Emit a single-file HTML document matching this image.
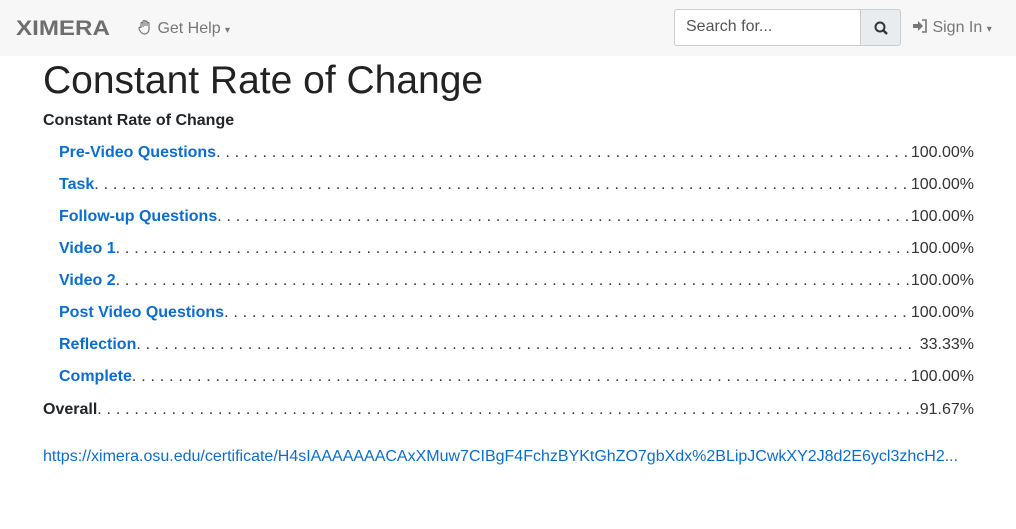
<!DOCTYPE html>
<html><head><meta charset="utf-8"><style>
*{box-sizing:border-box;margin:0;padding:0}
body{width:1016px;height:529px;background:#fff;font-family:"Liberation Sans",sans-serif;color:#212529;overflow:hidden;position:relative}
.nav{position:absolute;left:0;top:0;width:1016px;height:56px;background:#f7f7f7}
.logo{position:absolute;left:16px;top:17px;font-size:21px;font-weight:bold;color:#6e6e6e;letter-spacing:0px;transform:scaleX(1.15);transform-origin:left}
.help{position:absolute;left:137px;top:19px;font-size:16px;color:#777}
.search{position:absolute;left:674px;top:9px;width:187px;height:37px;border:1px solid #ccc;background:#fff;border-radius:3px 0 0 3px;font-size:16px;color:#555;padding:8px 11px}
.sbtn{position:absolute;left:860px;top:9px;width:41px;height:37px;border:1px solid #ccc;background:#e9ecef;border-radius:0 3px 3px 0}
.signin{position:absolute;left:912px;top:19px;font-size:16px;color:#777}
h1{position:absolute;left:43px;top:59px;font-size:39px;font-weight:400;color:#222}
.row{position:absolute;display:flex;font-size:16px;line-height:20px;white-space:nowrap}
.row a{color:#0a6ed1;font-weight:bold;text-decoration:none}
.fill{flex:1;overflow:hidden;letter-spacing:0.2px;color:#333}
.v{color:#333}
.b{font-weight:bold}
.url{position:absolute;left:43px;top:448px;font-size:16px;color:#0a6ed1;white-space:nowrap}
</style></head><body>
<div class="nav">
<div class="logo">XIMERA</div>
<div class="help"><svg width="16" height="16" viewBox="0 0 16 16" style="vertical-align:-2px"><path d="M4 9V4.5a1 1 0 0 1 2 0V8M6 7V2.5a1 1 0 0 1 2 0V7M8 7V3a1 1 0 0 1 2 0v4M10 7V4.5a1 1 0 0 1 2 0V10c0 3-2 5-4.5 5S3.5 13 2.5 11L2 9.5a1 1 0 0 1 2-.5" fill="none" stroke="#777" stroke-width="1.2"/></svg> Get Help <span style="font-size:10px">▾</span></div>
<div class="search">Search for...</div>
<div class="sbtn"><svg width="16" height="16" viewBox="0 0 16 16" style="position:absolute;left:12px;top:10px"><circle cx="7" cy="7" r="4.5" fill="none" stroke="#333" stroke-width="2"/><path d="M10.3 10.3L14 14" stroke="#333" stroke-width="2.4"/></svg></div>
<div class="signin"><svg width="16" height="14" viewBox="0 0 16 14" style="vertical-align:-1px"><path d="M1 5h5V2l5 5-5 5V9H1z" fill="#777"/><path d="M10 1h4v12h-4" fill="none" stroke="#777" stroke-width="1.6"/></svg> Sign In <span style="font-size:10px">▾</span></div>
</div>
<h1>Constant Rate of Change</h1>
<div class="row b" style="left:43px;top:111px">Constant Rate of Change</div>

<div class="row" style="left:59px;top:143px;width:915px"><a>Pre-Video Questions</a><span class="fill">. . . . . . . . . . . . . . . . . . . . . . . . . . . . . . . . . . . . . . . . . . . . . . . . . . . . . . . . . . . . . . . . . . . . . . . . . . . . . . . . . . . . . . . . . . . . . . . . . . . . . . . . . . . . . . . . . . . . . . . . . . . . . . . . . . . . . . . . . . . . . .</span><span class="v">100.00%</span></div>
<div class="row" style="left:59px;top:175px;width:915px"><a>Task</a><span class="fill">. . . . . . . . . . . . . . . . . . . . . . . . . . . . . . . . . . . . . . . . . . . . . . . . . . . . . . . . . . . . . . . . . . . . . . . . . . . . . . . . . . . . . . . . . . . . . . . . . . . . . . . . . . . . . . . . . . . . . . . . . . . . . . . . . . . . . . . . . . . . . .</span><span class="v">100.00%</span></div>
<div class="row" style="left:59px;top:207px;width:915px"><a>Follow-up Questions</a><span class="fill">. . . . . . . . . . . . . . . . . . . . . . . . . . . . . . . . . . . . . . . . . . . . . . . . . . . . . . . . . . . . . . . . . . . . . . . . . . . . . . . . . . . . . . . . . . . . . . . . . . . . . . . . . . . . . . . . . . . . . . . . . . . . . . . . . . . . . . . . . . . . . .</span><span class="v">100.00%</span></div>
<div class="row" style="left:59px;top:239px;width:915px"><a>Video 1</a><span class="fill">. . . . . . . . . . . . . . . . . . . . . . . . . . . . . . . . . . . . . . . . . . . . . . . . . . . . . . . . . . . . . . . . . . . . . . . . . . . . . . . . . . . . . . . . . . . . . . . . . . . . . . . . . . . . . . . . . . . . . . . . . . . . . . . . . . . . . . . . . . . . . .</span><span class="v">100.00%</span></div>
<div class="row" style="left:59px;top:271px;width:915px"><a>Video 2</a><span class="fill">. . . . . . . . . . . . . . . . . . . . . . . . . . . . . . . . . . . . . . . . . . . . . . . . . . . . . . . . . . . . . . . . . . . . . . . . . . . . . . . . . . . . . . . . . . . . . . . . . . . . . . . . . . . . . . . . . . . . . . . . . . . . . . . . . . . . . . . . . . . . . .</span><span class="v">100.00%</span></div>
<div class="row" style="left:59px;top:303px;width:915px"><a>Post Video Questions</a><span class="fill">. . . . . . . . . . . . . . . . . . . . . . . . . . . . . . . . . . . . . . . . . . . . . . . . . . . . . . . . . . . . . . . . . . . . . . . . . . . . . . . . . . . . . . . . . . . . . . . . . . . . . . . . . . . . . . . . . . . . . . . . . . . . . . . . . . . . . . . . . . . . . .</span><span class="v">100.00%</span></div>
<div class="row" style="left:59px;top:335px;width:915px"><a>Reflection</a><span class="fill">. . . . . . . . . . . . . . . . . . . . . . . . . . . . . . . . . . . . . . . . . . . . . . . . . . . . . . . . . . . . . . . . . . . . . . . . . . . . . . . . . . . . . . . . . . . . . . . . . . . . . . . . . . . . . . . . . . . . . . . . . . . . . . . . . . . . . . . . . . . . . .</span><span class="v">&nbsp;33.33%</span></div>
<div class="row" style="left:59px;top:367px;width:915px"><a>Complete</a><span class="fill">. . . . . . . . . . . . . . . . . . . . . . . . . . . . . . . . . . . . . . . . . . . . . . . . . . . . . . . . . . . . . . . . . . . . . . . . . . . . . . . . . . . . . . . . . . . . . . . . . . . . . . . . . . . . . . . . . . . . . . . . . . . . . . . . . . . . . . . . . . . . . .</span><span class="v">100.00%</span></div>
<div class="row" style="left:43px;top:400px;width:931px"><span class="b">Overall</span><span class="fill">. . . . . . . . . . . . . . . . . . . . . . . . . . . . . . . . . . . . . . . . . . . . . . . . . . . . . . . . . . . . . . . . . . . . . . . . . . . . . . . . . . . . . . . . . . . . . . . . . . . . . . . . . . . . . . . . . . . . . . . . . . . . . . . . . . . . . . . . . . . . . .</span><span class="v">91.67%</span></div>

<div class="url">https://ximera.osu.edu/certificate/H4sIAAAAAAACAxXMuw7CIBgF4FchzBYKtGhZO7gbXdx%2BLipJCwkXY2J8d2E6ycl3zhcH2...</div>
</body></html>
